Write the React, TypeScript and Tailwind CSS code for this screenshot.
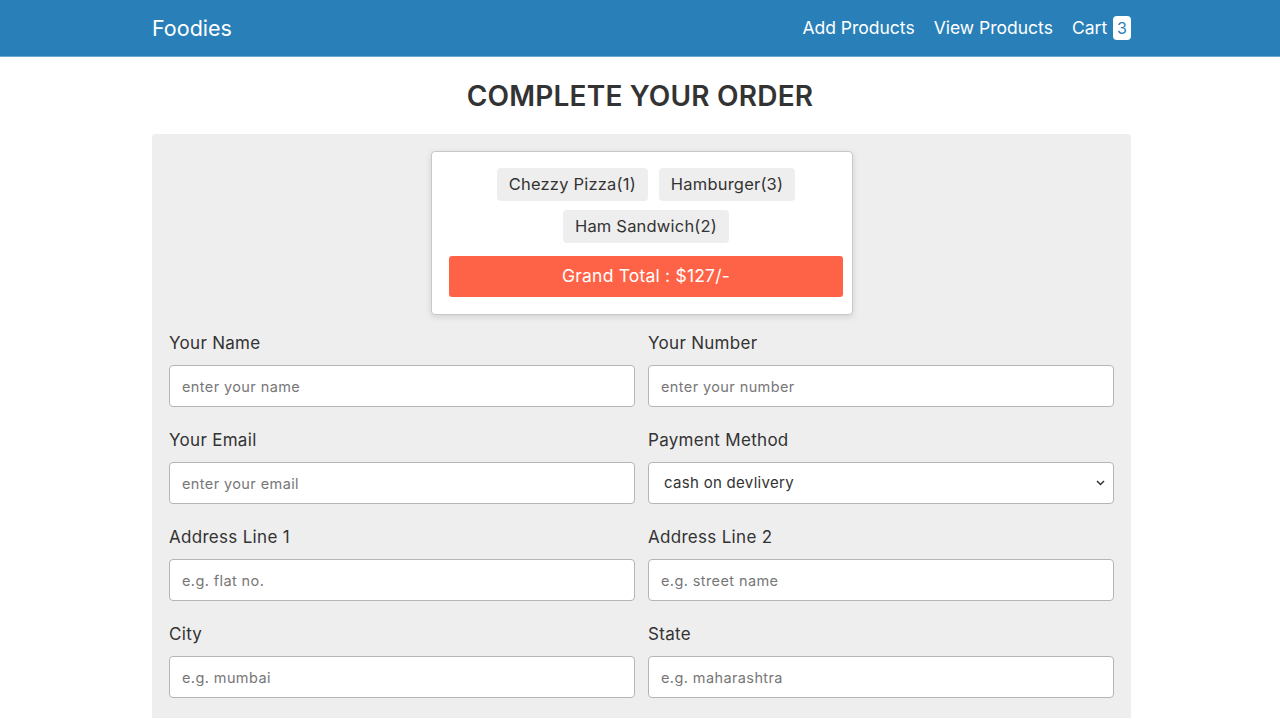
import React from 'react';

const font = { fontFamily: '"Inter", "Open Sans", sans-serif' };

const items = [
    { name: 'Chezzy Pizza', qty: 1 },
    { name: 'Hamburger', qty: 3 },
    { name: 'Ham Sandwich', qty: 2 },
];

const Field: React.FC<{ label: string; placeholder: string }> = ({ label, placeholder }) => (
    <div className="flex flex-col">
        <label className="text-[17px] tracking-[0.3px] text-[#333] leading-[24px] mb-[10px]">{label}</label>
        <input
            placeholder={placeholder}
            className="h-[42px] w-full bg-white border border-[#b5b5b5] rounded-[4px] px-[12px] text-[14.5px] tracking-[0.4px] text-[#333] placeholder:text-[#777] outline-none"
        />
    </div>
);

export default function App() {
    return (
        <div className="min-h-screen bg-white" style={font}>
            {/* navbar */}
            <header className="h-[57px] bg-[#2980b9] border-b border-[#6fa7cf]">
                <div className="w-[979px] ml-[152px] h-full flex items-center justify-between">
                    <span className="text-white text-[21.5px]">Foodies</span>
                    <nav className="flex items-center gap-[19px] text-white text-[17.5px]">
                        <a>Add Products</a>
                        <a>View Products</a>
                        <a className="flex items-center gap-[6px]">
                            Cart
                            <span className="bg-white text-[#2980b9] rounded-[4px] px-[4px] h-[24px] leading-[24px] text-[16px]">3</span>
                        </a>
                    </nav>
                </div>
            </header>

            <h1 className="text-center text-[28px] font-semibold text-[#333] mt-[18px] mb-[17px] tracking-[0.2px]">COMPLETE YOUR ORDER</h1>

            <div className="w-[979px] ml-[152px] bg-[#eeeeee] rounded-t-[4px] px-[17px] pt-[17px] pb-[20px]">
                {/* order summary */}
                <div className="w-[422px] ml-[262px] bg-white border border-[#c8c8c8] rounded-[4px] shadow-[0_2px_6px_rgba(0,0,0,0.12)] pl-[17px] pr-[9px] pt-[16px] pb-[17px] mb-[16px]">
                    <div className="flex flex-wrap justify-center gap-x-[11px] gap-y-[9px] px-[30px]">
                        {items.map(it => (
                            <span key={it.name} className="bg-[#eeeeee] rounded-[4px] px-[12px] h-[33px] leading-[33px] text-[16.5px] tracking-[0.2px] text-[#333]">
                                {it.name}({it.qty})
                            </span>
                        ))}
                    </div>
                    <div className="mt-[13px] h-[41px] bg-[#ff6347] rounded-[3px] text-white text-[17.5px] tracking-[0.2px] flex items-center justify-center">
                        Grand Total : $127/-
                    </div>
                </div>

                {/* form */}
                <div className="grid grid-cols-2 gap-x-[13px] gap-y-[21px]">
                    <Field label="Your Name" placeholder="enter your name" />
                    <Field label="Your Number" placeholder="enter your number" />
                    <Field label="Your Email" placeholder="enter your email" />
                    <div className="flex flex-col">
                        <label className="text-[17px] tracking-[0.3px] text-[#333] leading-[24px] mb-[10px]">Payment Method</label>
                        <div className="relative">
                            <select className="h-[42px] w-full appearance-none bg-white border border-[#b5b5b5] rounded-[4px] px-[15px] text-[15px] tracking-[0.3px] text-[#333] outline-none">
                                <option>cash on devlivery</option>
                            </select>
                            <svg className="absolute right-[9px] top-[18px] pointer-events-none" width="9" height="6" viewBox="0 0 9 6">
                                <path d="M1 1 L4.5 4.5 L8 1" fill="none" stroke="#333" strokeWidth="1.5" />
                            </svg>
                        </div>
                    </div>
                    <Field label="Address Line 1" placeholder="e.g. flat no." />
                    <Field label="Address Line 2" placeholder="e.g. street name" />
                    <Field label="City" placeholder="e.g. mumbai" />
                    <Field label="State" placeholder="e.g. maharashtra" />
                </div>
            </div>
        </div>
    );
}
